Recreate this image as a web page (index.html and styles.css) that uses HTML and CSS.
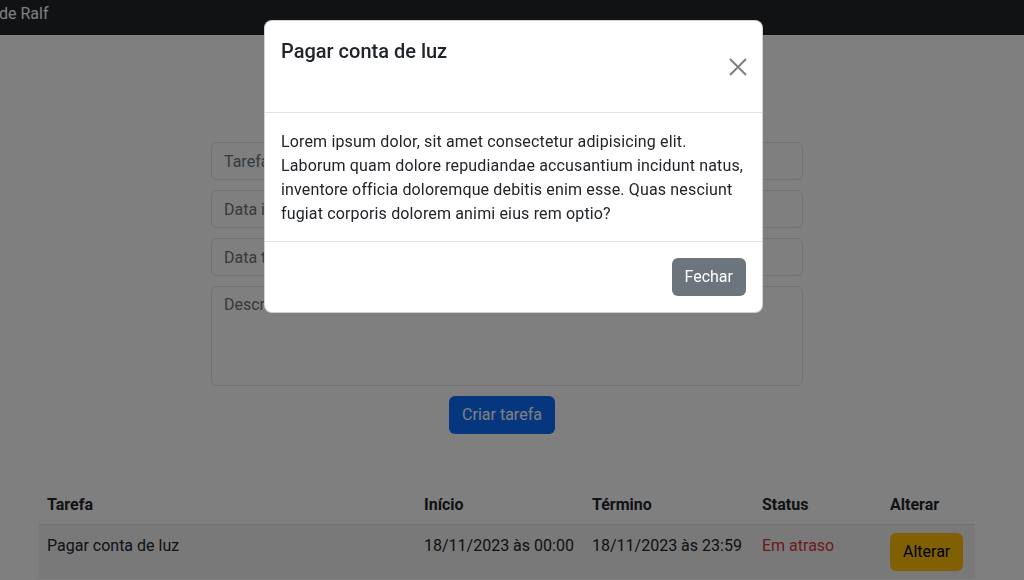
FILE: index.html
```html
<!DOCTYPE html>
<html lang="pt-BR">
<head>
<meta charset="utf-8">
<title>Tarefas de Ralf</title>
<link rel="stylesheet" href="styles.css">
</head>
<body>
<nav class="navbar"><span class="brand">de Ralf</span></nav>
<main class="container">
  <form class="task-form">
    <input class="field" type="text" placeholder="Tarefa">
    <input class="field" type="text" placeholder="Data início">
    <input class="field" type="text" placeholder="Data término">
    <textarea class="field area" placeholder="Descrição"></textarea>
    <div class="form-actions"><button type="button" class="btn btn-primary">Criar tarefa</button></div>
  </form>
  <table class="tasks">
    <thead>
      <tr><th class="c1">Tarefa</th><th class="c2">Início</th><th class="c3">Término</th><th class="c4">Status</th><th class="c5">Alterar</th></tr>
    </thead>
    <tbody>
      <tr><td class="text">Pagar conta de luz</td><td class="text">18/11/2023 às 00:00</td><td class="text">18/11/2023 às 23:59</td><td class="text late">Em atraso</td><td><button type="button" class="btn btn-warning">Alterar</button></td></tr>
    </tbody>
  </table>
</main>
<div class="backdrop"></div>
<div class="modal">
  <div class="modal-header">
    <h5 class="modal-title">Pagar conta de luz</h5>
    <button type="button" class="btn-close" aria-label="Fechar">
      <svg width="18" height="18" viewBox="0 0 18 18"><path d="M1 1L17 17M17 1L1 17" stroke="#000" stroke-width="2" fill="none"/></svg>
    </button>
  </div>
  <div class="modal-body">
    <p>Lorem ipsum dolor, sit amet consectetur adipisicing elit. Laborum quam dolore repudiandae accusantium incidunt natus, inventore officia doloremque debitis enim esse. Quas nesciunt fugiat corporis dolorem animi eius rem optio?</p>
  </div>
  <div class="modal-footer">
    <button type="button" class="btn btn-secondary">Fechar</button>
  </div>
</div>
</body>
</html>
```
FILE: styles.css
```css
* { box-sizing: border-box; }
html, body { margin: 0; padding: 0; }
body {
  font-family: Roboto, "Liberation Sans", sans-serif;
  font-size: 16px;
  line-height: 24px;
  color: #212529;
  background: #fff;
  height: 580px;
  overflow: hidden;
}
.navbar {
  height: 35px;
  background: #212529;
  display: flex;
  align-items: flex-start;
}
.brand {
  color: #fff;
  font-size: 16px;
  line-height: 27px;
  margin-left: -1px;
}
.container {
  width: 936px;
  margin: 0 0 0 39px;
}
.task-form {
  width: 592px;
  margin: 107px auto 0;
  display: flex;
  flex-direction: column;
  gap: 10px;
}
.field {
  display: block;
  width: 100%;
  height: 38px;
  padding: 6px 12px;
  font: inherit;
  color: #212529;
  background: #fff;
  border: 1px solid #dee2e6;
  border-radius: 6px;
}
.field::placeholder { color: #6c757d; }
.area { height: 100px; resize: none; }
.form-actions {
  display: flex;
  justify-content: center;
  padding-right: 10px;
}
.btn {
  font: inherit;
  height: 38px;
  padding: 6px 12px;
  border: 1px solid transparent;
  border-radius: 6px;
  cursor: pointer;
}
.btn-primary { background: #0d6efd; color: #fff; }
.btn-warning { background: #ffc107; color: #000; }
.btn-secondary { background: #6c757d; color: #fff; }
.tasks {
  width: 936px;
  margin-top: 50px;
  border-collapse: collapse;
}
.tasks th, .tasks td {
  text-align: left;
  padding: 9px 8px 7px;
  vertical-align: top;
}
.tasks th { font-weight: 700; border-bottom: 1px solid #dee2e6; }
.tasks td { padding: 8px; }
.tasks td.text { padding-top: 9px; }
.tasks tbody tr { background: rgba(0,0,0,.05); }
.c1 { width: 377px; }
.c2 { width: 168px; }
.c3 { width: 170px; }
.c4 { width: 128px; }
.c5 { width: 93px; }
.late { color: #dc3545; }
.backdrop {
  position: fixed;
  inset: 0;
  background: rgba(0,0,0,.5);
}
.modal {
  position: fixed;
  top: 20px;
  left: 264px;
  width: 499px;
  background: #fff;
  border: 1px solid rgba(0,0,0,.175);
  border-radius: 8px;
  overflow: hidden;
}
.modal-header {
  height: 92px;
  padding: 16px;
  display: flex;
  justify-content: space-between;
  align-items: center;
  border-bottom: 1px solid #dee2e6;
}
.modal-title {
  align-self: flex-start;
  margin: 2px 0 0;
  font-size: 20px;
  line-height: 24px;
  font-weight: 500;
}
.btn-close {
  width: 32px;
  height: 32px;
  padding: 0;
  margin-right: -8px;
  border: 0;
  background: transparent;
  opacity: .5;
  display: flex;
  align-items: center;
  justify-content: center;
}
.modal-body { padding: 17px 16px 15px; letter-spacing: .15px; }
.modal-body p { margin: 0; }
.modal-footer {
  padding: 12px;
  display: flex;
  justify-content: flex-end;
  border-top: 1px solid #dee2e6;
}
.modal-footer .btn { margin: 4px; }
```
